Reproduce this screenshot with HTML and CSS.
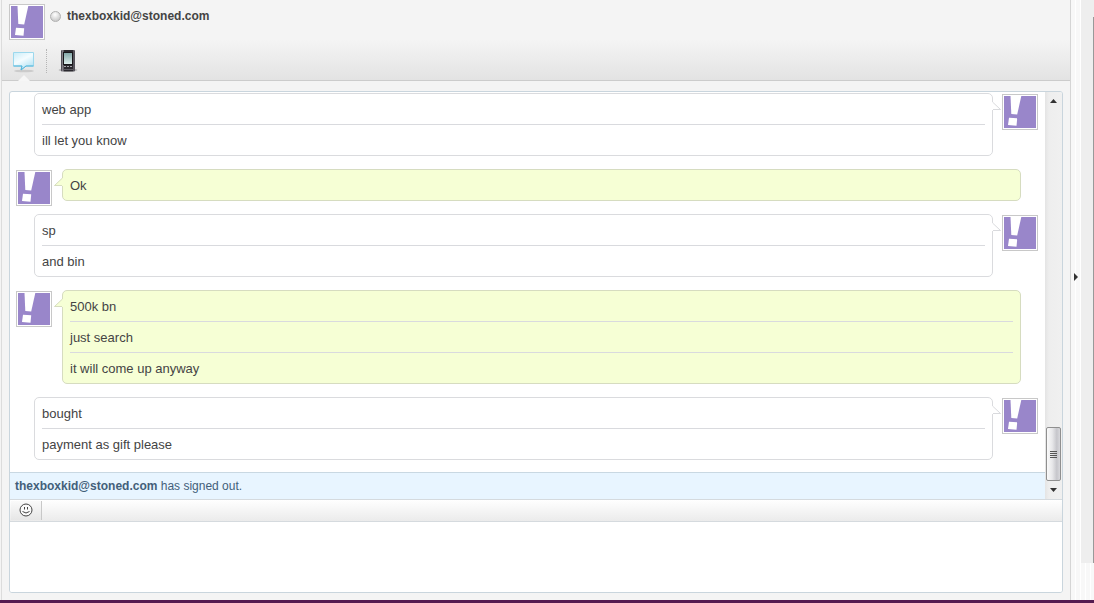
FILE: index.html
```html
<!DOCTYPE html>
<html lang="en">
<head>
    <meta charset="UTF-8">
    <meta name="viewport" content="width=device-width, initial-scale=1.0">
    <title>thexboxkid@stoned.com</title>
    <link rel="stylesheet" href="styles.css">
</head>
<body>
    <!-- shared shapes -->
    <svg class="defs" width="0" height="0" aria-hidden="true">
        <symbol id="avatar" viewBox="0 0 32 32">
            <rect width="32" height="32" fill="#9986ca"/>
            <path d="M6.500 0H17.300L13.200 18.500L7.300 18Z" fill="#fff"/>
            <path d="M5 21.700L13.200 22.300L12.500 29.800L4 29Z" fill="#fff"/>
        </symbol>
        <symbol id="tail-right" viewBox="0 0 10 9">
            <path d="M0 0L1 0L9 8H0Z" fill="#fff"/>
            <path d="M0.500 0L8.500 7.500H1" fill="none" stroke="#d9dadd"/>
        </symbol>
        <symbol id="tail-left" viewBox="0 0 10 9">
            <path d="M10 0H9L1 8H10Z" fill="#f6ffd5"/>
            <path d="M9.500 0L1.500 7.500H9" fill="none" stroke="#d6dcc0"/>
        </symbol>
    </svg>

    <div class="app">
        <main class="panel">
            <header class="header">
                <div class="contact">
                    <svg class="avatar"><use href="#avatar"/></svg>
                    <span class="status"></span>
                    <h1 class="name">thexboxkid@stoned.com</h1>
                </div>
                <nav class="tabs">
                    <button class="tab active" type="button" aria-label="Chat">
                        <svg width="24" height="24" viewBox="0 0 24 24">
                            <defs>
                                <linearGradient id="glass" x1="0" y1="0" x2="0.600" y2="1">
                                    <stop offset="0" stop-color="#c9ecf8"/>
                                    <stop offset="0.500" stop-color="#f4fcff"/>
                                    <stop offset="1" stop-color="#b5e4f5"/>
                                </linearGradient>
                            </defs>
                            <ellipse cx="12" cy="22" rx="10" ry="1.300" fill="#cbcbcb"/>
                            <path d="M1.500 3.500H21.500V17H14L9 21L10 17H1.500Z" fill="url(#glass)" stroke="#9cd8ed"/>
                            <path d="M1.500 17H10L9 21L14 17H21.500" fill="none" stroke="#4fb4db"/>
                        </svg>
                    </button>
                    <button class="tab" type="button" aria-label="Mobile">
                        <svg width="20" height="24" viewBox="0 0 20 24">
                            <defs>
                                <linearGradient id="screen" x1="0" y1="0" x2="0" y2="1">
                                    <stop offset="0" stop-color="#7fa5a6"/>
                                    <stop offset="1" stop-color="#e2f1ef"/>
                                </linearGradient>
                                <linearGradient id="shell" x1="0" y1="0" x2="1" y2="0">
                                    <stop offset="0" stop-color="#3a373f"/>
                                    <stop offset="0.120" stop-color="#8b8890"/>
                                    <stop offset="0.250" stop-color="#2b292f"/>
                                    <stop offset="0.850" stop-color="#2b292f"/>
                                    <stop offset="0.920" stop-color="#77747c"/>
                                    <stop offset="1" stop-color="#3a373f"/>
                                </linearGradient>
                            </defs>
                            <ellipse cx="10" cy="21" rx="9.500" ry="1.500" fill="#b5b5b5"/>
                            <rect x="3" y="1" width="14" height="21.500" rx="1" fill="url(#shell)"/>
                            <rect x="5.500" y="3.500" width="9" height="12" fill="url(#screen)" stroke="#18171b"/>
                            <path d="M6 17.500H8M9 17.500H11M12 17.500H14" stroke="#aaa8af"/>
                            <path d="M5 20.500H15" stroke="#5d5a62"/>
                        </svg>
                    </button>
                </nav>
            </header>

            <section class="chat">
                <div class="history">
                    <div class="log">
                        <div class="group me">
                            <div class="bubble">
                                <p>web app</p>
                                <p>ill let you know</p>
                                <svg class="tail"><use href="#tail-right"/></svg>
                            </div>
                            <svg class="avatar"><use href="#avatar"/></svg>
                        </div>
                        <div class="group them">
                            <svg class="avatar"><use href="#avatar"/></svg>
                            <div class="bubble">
                                <p>Ok</p>
                                <svg class="tail"><use href="#tail-left"/></svg>
                            </div>
                        </div>
                        <div class="group me">
                            <div class="bubble">
                                <p>sp</p>
                                <p>and bin</p>
                                <svg class="tail"><use href="#tail-right"/></svg>
                            </div>
                            <svg class="avatar"><use href="#avatar"/></svg>
                        </div>
                        <div class="group them">
                            <svg class="avatar"><use href="#avatar"/></svg>
                            <div class="bubble">
                                <p>500k bn</p>
                                <p>just search</p>
                                <p>it will come up anyway</p>
                                <svg class="tail"><use href="#tail-left"/></svg>
                            </div>
                        </div>
                        <div class="group me">
                            <div class="bubble">
                                <p>bought</p>
                                <p>payment as gift please</p>
                                <svg class="tail"><use href="#tail-right"/></svg>
                            </div>
                            <svg class="avatar"><use href="#avatar"/></svg>
                        </div>
                        <p class="notice"><strong>thexboxkid@stoned.com</strong> has signed out.</p>
                    </div>
                    <div class="scrollbar">
                        <button class="scroll-btn" type="button" aria-label="Scroll up">
                            <svg width="7" height="4" viewBox="0 0 7 4"><path d="M3.500 0L7 4H0Z" fill="#333"/></svg>
                        </button>
                        <div class="track"><div class="thumb"><i></i><i></i><i></i><i></i></div></div>
                        <button class="scroll-btn" type="button" aria-label="Scroll down">
                            <svg width="7" height="4" viewBox="0 0 7 4"><path d="M0 0H7L3.500 4Z" fill="#333"/></svg>
                        </button>
                    </div>
                </div>
                <div class="toolbar">
                    <button class="smile" type="button" aria-label="Emoticons">
                        <svg width="14" height="14" viewBox="0 0 14 14">
                            <circle cx="7" cy="7" r="6" fill="#fafafa" stroke="#444"/>
                            <path d="M5.500 4V6.500M8.500 4V6.500" stroke="#444"/>
                            <path d="M3.500 8.500Q7 11.500 10.500 8.500" fill="none" stroke="#444"/>
                        </svg>
                    </button>
                </div>
                <textarea class="compose" aria-label="Message"></textarea>
            </section>
        </main>

        <button class="splitter" type="button" aria-label="Collapse sidebar">
            <svg width="4" height="8" viewBox="0 0 4 8"><path d="M0 0L4 4L0 8Z" fill="#333"/></svg>
        </button>
        <aside class="side"><div class="side-body"></div></aside>
    </div>
</body>
</html>
```

FILE: styles.css
```css
* {
    box-sizing: border-box;
}

body {
    margin: 0;
    font-family: "Liberation Sans", Arial, sans-serif;
    font-size: 13px;
    color: #444;
    background: #f4f4f4;
}

h1, p {
    margin: 0;
}

button {
    padding: 0;
    border: 0;
    background: none;
    cursor: pointer;
}

svg {
    display: block;
}

.defs {
    position: absolute;
}

.app {
    display: flex;
    height: 100vh;
    border-bottom: 3px solid #551a50;
}

.panel {
    flex: 1;
    min-width: 0;
    display: flex;
    flex-direction: column;
    margin-left: 1px;
    border-left: 1px solid #dcdcdc;
    border-right: 1px solid #d5d5d5;
}

/* header */
.header {
    padding: 4px 7px 0;
    background: linear-gradient(#f4f4f4 40px, #e3e3e3);
    border-bottom: 1px solid #ccc;
}

.contact {
    display: flex;
    align-items: flex-start;
}

.avatar {
    flex: none;
    width: 36px;
    height: 36px;
    padding: 1px;
    background: #fff;
    border: 1px solid #c8c8c8;
}

.status {
    width: 11px;
    height: 11px;
    margin: 7px 6px 0 5px;
    border: 1px solid #b0b0b0;
    border-radius: 50%;
    background: radial-gradient(circle at 45% 30%, #fff, #bbb);
}

.name {
    padding-top: 4px;
    font-size: 12px;
    line-height: 16px;
}

.tabs {
    display: flex;
    padding: 9px 0 7px;
}

.tab {
    position: relative;
    display: flex;
    justify-content: center;
    width: 42px;
    height: 24px;
}

.tab.active {
    justify-content: flex-start;
    width: 38px;
    padding-left: 3px;
    border-right: 1px dotted #b5b5b5;
}

.tab.active::after {
    content: "";
    position: absolute;
    left: 9px;
    bottom: -8px;
    border: 6px solid transparent;
    border-top: 0;
    border-bottom-color: #f6f6f6;
}

/* chat box */
.chat {
    flex: 1;
    min-height: 0;
    display: flex;
    flex-direction: column;
    margin: 10px 7px 7px;
    background: #fff;
    border: 1px solid #c9d5dd;
    border-radius: 3px;
    overflow: hidden;
}

.history {
    flex: none;
    display: flex;
}

.log {
    flex: 1;
    min-width: 0;
    padding-top: 1px;
}

.group {
    display: flex;
    align-items: flex-start;
    gap: 10px;
    margin-bottom: 13px;
}

.group.me {
    gap: 9px;
    padding: 0 7px 0 24px;
}

.group.them {
    padding: 0 24px 0 6px;
}

/* a one-line bubble is shorter than the avatar */
.group .avatar {
    margin: 1px 0 -10px;
}

.bubble {
    position: relative;
    flex: 1;
    padding: 0 7px;
    background: #fff;
    border: 1px solid #dadbde;
    border-radius: 5px;
}

.them .bubble {
    background: #f6ffd5;
    border-color: #d6dcc0;
}

.bubble p {
    padding-top: 2px;
    line-height: 28px;
}

.bubble p + p {
    border-top: 1px solid #d9dade;
}

.tail {
    position: absolute;
    top: 8px;
    width: 10px;
    height: 9px;
}

.me .tail {
    right: -10px;
}

.them .tail {
    left: -10px;
}

.notice {
    margin-top: -1px;
    padding-left: 5px;
    border-top: 1px solid #c9d8e2;
    background: #e8f5ff;
    color: #435f7a;
    font-size: 12px;
    line-height: 26px;
}

/* scrollbar */
.scrollbar {
    display: flex;
    flex-direction: column;
    width: 17px;
    padding: 0 1px 1px;
    background: linear-gradient(to right, #e4e4e4, #eee 4px, #f0f0f0);
}

.scroll-btn {
    display: flex;
    align-items: center;
    justify-content: center;
    height: 17px;
}

.track {
    flex: 1;
    display: flex;
    flex-direction: column;
    justify-content: flex-end;
}

.thumb {
    display: flex;
    flex-direction: column;
    align-items: center;
    justify-content: center;
    gap: 1px;
    height: 54px;
    border: 1px solid #8f8f8f;
    border-radius: 2px;
    background: linear-gradient(to right, #fafafa, #e8e8ea 40%, #c6c6cb 75%, #d8d8dc);
}

.thumb i {
    width: 7px;
    height: 1px;
    background: #555;
}

/* composer */
.toolbar {
    flex: none;
    display: flex;
    height: 23px;
    padding: 1px;
    border-top: 1px solid #d5dade;
    border-bottom: 1px solid #d5dade;
    background: linear-gradient(#fff, #ebebeb);
}

.smile {
    display: flex;
    align-items: center;
    justify-content: center;
    width: 31px;
    padding-bottom: 1px;
    border-right: 1px solid #c8c8c8;
    background: linear-gradient(#fafafa, #e6e6e6);
}

.compose {
    flex: 1;
    min-height: 0;
    padding: 5px;
    border: 0;
    outline: 0;
    resize: none;
    font: inherit;
    color: inherit;
}

/* right edge */
.splitter {
    display: flex;
    align-items: center;
    width: 10px;
    padding: 0 3px;
    background: repeating-linear-gradient(to right, #f8f8f8 0, #f8f8f8 4px, #fff 4px, #fff 5px);
}

.splitter svg {
    margin-bottom: 46px;
}

.side {
    width: 13px;
    padding-bottom: 37px;
    background: repeating-linear-gradient(to right, #f8f8f8 0, #f8f8f8 4px, #fff 4px, #fff 5px);
}

.side-body {
    height: 100%;
    background: linear-gradient(#eee, #eee 17px, #999 17px) right / 1px 100% no-repeat #eee;
}
```
